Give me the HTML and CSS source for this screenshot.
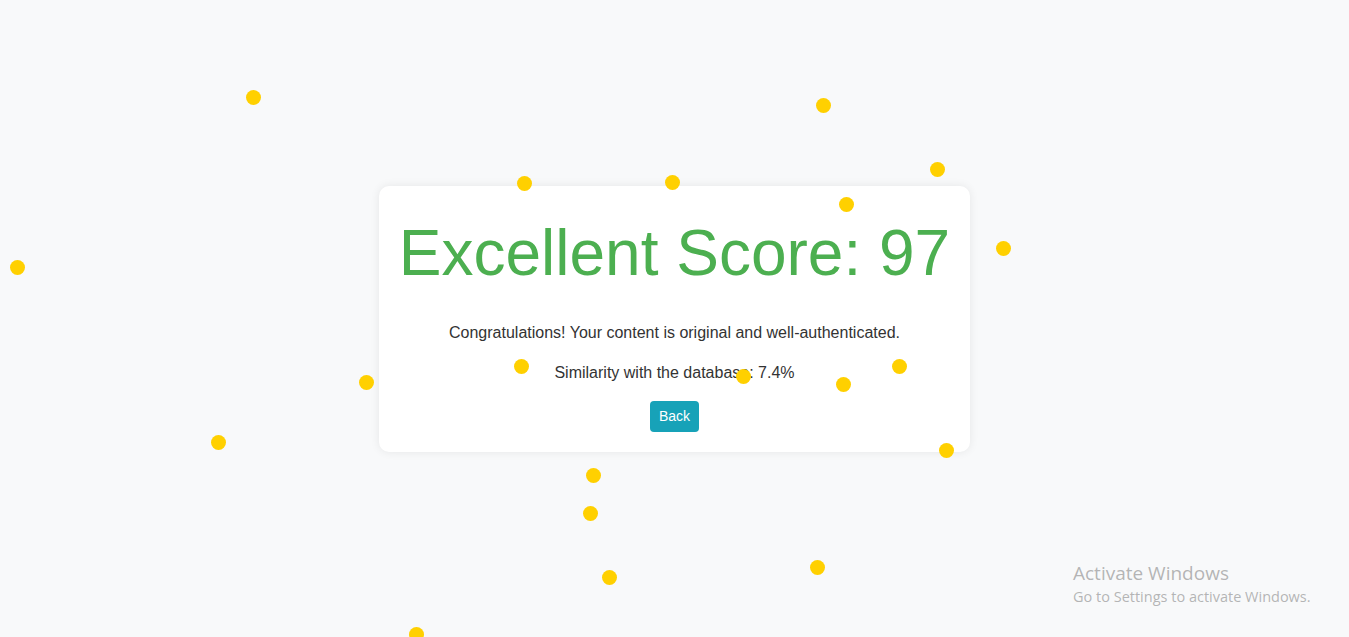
FILE: index.html
```html
<!DOCTYPE html>
<html lang="en">
<head>
<meta charset="utf-8">
<title>Result</title>
<link rel="stylesheet" href="styles.css">
</head>
<body>
<main class="page">
  <section class="card">
    <h1 class="score">Excellent Score: 97</h1>
    <p class="msg">Congratulations! Your content is original and well-authenticated.</p>
    <p class="msg">Similarity with the database: 7.4%</p>
    <button class="btn-back" type="button">Back</button>
  </section>
</main>
<div class="confetti">
  <span class="dot" style="left:253px;top:97px"></span>
  <span class="dot" style="left:823px;top:105px"></span>
  <span class="dot" style="left:937px;top:169px"></span>
  <span class="dot" style="left:524px;top:183px"></span>
  <span class="dot" style="left:672px;top:182px"></span>
  <span class="dot" style="left:846px;top:204px"></span>
  <span class="dot" style="left:17px;top:267px"></span>
  <span class="dot" style="left:1003px;top:248px"></span>
  <span class="dot" style="left:521px;top:366px"></span>
  <span class="dot" style="left:743px;top:376px"></span>
  <span class="dot" style="left:899px;top:366px"></span>
  <span class="dot" style="left:843px;top:384px"></span>
  <span class="dot" style="left:366px;top:382px"></span>
  <span class="dot" style="left:218px;top:442px"></span>
  <span class="dot" style="left:946px;top:450px"></span>
  <span class="dot" style="left:593px;top:475px"></span>
  <span class="dot" style="left:590px;top:513px"></span>
  <span class="dot" style="left:609px;top:577px"></span>
  <span class="dot" style="left:817px;top:567px"></span>
  <span class="dot" style="left:416px;top:634px"></span>
</div>
<div class="activate">
  <div class="activate-title">Activate Windows</div>
  <div class="activate-sub">Go to Settings to activate Windows.</div>
</div>
</body>
</html>
```
FILE: styles.css
```css
html, body {
  margin: 0;
  padding: 0;
  height: 100%;
}
body {
  background: #f8f9fa;
  font-family: "Liberation Sans", Arial, sans-serif;
  color: #333;
  line-height: 1.5;
  overflow: hidden;
}
.page {
  height: 100%;
  display: flex;
  justify-content: center;
  align-items: center;
}
.card {
  background: #fff;
  border-radius: 10px;
  box-shadow: 0 0 10px rgba(0, 0, 0, 0.08);
  padding: 19px 20px 20px;
  text-align: center;
}
.score {
  margin: 0 0 20px;
  font-size: 64px;
  font-weight: normal;
  color: #4caf50;
}
.msg {
  margin: 16px 0;
  font-size: 16px;
}
.btn-back {
  background: #17a2b8;
  color: #fff;
  border: none;
  border-radius: 4px;
  font-family: "Liberation Sans", Arial, sans-serif;
  font-size: 14px;
  line-height: 21px;
  padding: 5px 9px;
  cursor: pointer;
}
.confetti {
  position: absolute;
  inset: 0;
  pointer-events: none;
  overflow: hidden;
}
.dot {
  position: absolute;
  width: 15px;
  height: 15px;
  margin: -7.5px 0 0 -7.5px;
  border-radius: 50%;
  background: #ffd000;
}
.activate {
  position: absolute;
  left: 1073px;
  top: 562px;
  font-family: "Open Sans", "Noto Sans", sans-serif;
  color: rgba(150, 150, 150, 0.7);
  line-height: 1.2;
}
.activate-title {
  font-size: 19px;
}
.activate-sub {
  font-size: 14.5px;
  margin-top: 3px;
}
```
